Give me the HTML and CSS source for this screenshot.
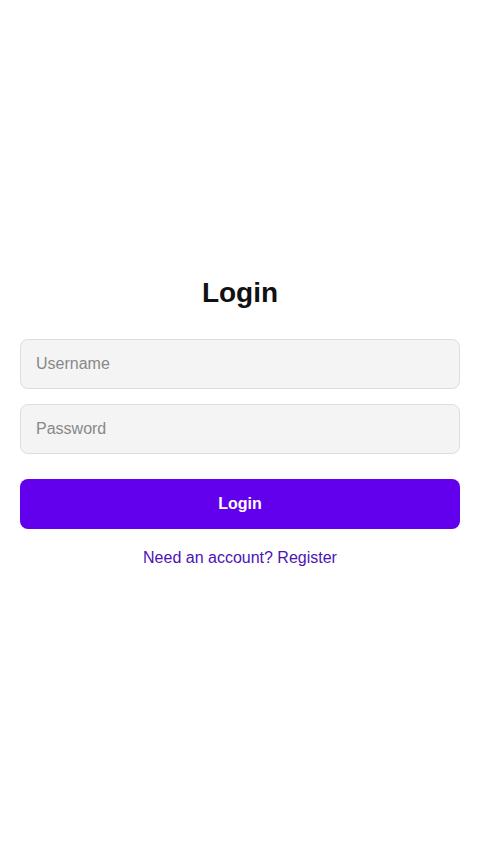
FILE: index.html
```html
<!DOCTYPE html>
<html lang="en">
<head>
<meta charset="utf-8">
<title>Login</title>
<link rel="stylesheet" href="styles.css">
</head>
<body>
<main class="page">
  <form class="login-form" onsubmit="return false">
    <h2 class="title">Login</h2>
    <input class="field" type="text" placeholder="Username">
    <input class="field" type="password" placeholder="Password">
    <button class="submit" type="submit">Login</button>
    <a class="switch-link" href="#">Need an account? Register</a>
  </form>
</main>
</body>
</html>
```
FILE: styles.css
```css
* { box-sizing: border-box; }
html, body {
  margin: 0;
  padding: 0;
  height: 100%;
  background: #ffffff;
  font-family: "Liberation Sans", Arial, sans-serif;
}
.page {
  min-height: 100vh;
  display: flex;
  align-items: center;
  justify-content: center;
  padding: 0 20px;
}
.login-form {
  width: 100%;
  display: flex;
  flex-direction: column;
  align-items: stretch;
}
.title {
  margin: 0 0 30px;
  font-size: 28px;
  font-weight: 700;
  line-height: 32px;
  color: #111111;
  text-align: center;
}
.field {
  height: 50px;
  margin: 0 0 15px;
  padding: 0 15px;
  border: 1px solid #dddddd;
  border-radius: 8px;
  background: #f4f4f4;
  font-family: inherit;
  font-size: 16px;
  color: #222222;
  outline: none;
}
.field::placeholder { color: #888888; }
.submit {
  height: 50px;
  margin-top: 10px;
  border: none;
  border-radius: 8px;
  background: #6200ee;
  color: #ffffff;
  font-family: inherit;
  font-size: 16px;
  font-weight: 700;
  cursor: pointer;
}
.switch-link {
  margin-top: 20px;
  text-align: center;
  font-size: 16px;
  line-height: 18px;
  color: #4b14b5;
  text-decoration: none;
}
```
